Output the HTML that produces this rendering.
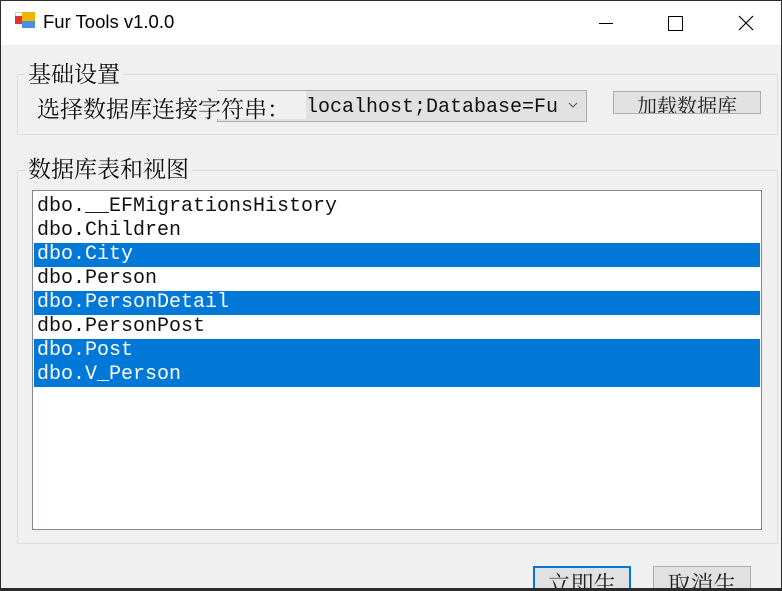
<!DOCTYPE html>
<html><head><meta charset="utf-8"><style>
*{margin:0;padding:0;box-sizing:border-box}
body{width:782px;height:591px;overflow:hidden;background:#2b2b2b;position:relative;font-family:"Liberation Sans","Noto Sans CJK SC",sans-serif}
.win{position:absolute;left:1px;top:1px;width:780px;height:587px;background:#f0f0f0;overflow:hidden}
.title{position:absolute;left:0;top:0;width:780px;height:44px;background:#fff}
.abs{position:absolute}
.cjk{font-family:"Noto Serif CJK SC","Noto Sans CJK SC",serif;font-size:23px;color:#111;line-height:1;white-space:nowrap}
.grp{position:absolute;border:1px solid #dcdcdc}
.legend{position:absolute;background:#f0f0f0;padding:0 3px}
.list{position:absolute;left:31px;top:189px;width:730px;height:340px;background:#fff;border:1px solid #828790}
.row{height:24px;line-height:24px;padding-left:3px;font-family:"Liberation Mono","Noto Serif CJK SC",monospace;font-size:20px;color:#111;margin:0 1px}
.sel{background:#0078d7;color:#fff}
.btn{position:absolute;background:#e1e1e1;border:1px solid #adadad;text-align:center}
</style></head><body>
<div class="win">
<div class="title">
 <div class="abs" style="left:14px;top:11px;width:8px;height:8px;background:#fff;border:1px solid #ccc"></div>
 <div class="abs" style="left:14px;top:15px;width:8px;height:8px;background:#d33;"></div>
 <div class="abs" style="left:21px;top:11px;width:13px;height:9px;background:#f0b400"></div>
 <div class="abs" style="left:21px;top:20px;width:13px;height:7px;background:#4a8fe0"></div>
 <div class="abs" style="left:42px;top:10px;font-size:18.5px;color:#000">Fur Tools v1.0.0</div>
 <div class="abs" style="left:598px;top:22px;width:14px;height:1px;background:#000"></div>
 <div class="abs" style="left:667px;top:15px;width:15px;height:15px;border:1px solid #000"></div>
 <svg class="abs" style="left:737px;top:14px" width="16" height="16"><path d="M1 1L15 15M15 1L1 15" stroke="#000" stroke-width="1.2"/></svg>
</div>
<div class="grp" style="left:16px;top:73px;width:761px;height:61px"></div>
<div class="legend cjk" style="left:24px;top:60px">基础设置</div>
<div class="abs" style="left:216px;top:89px;width:370px;height:32px;background:#e1e1e1;border:1px solid #adadad"></div>
<div class="abs" style="left:216px;top:90px;width:89px;height:28px;background:#f0f0f0"></div>
<div class="abs cjk" style="left:36px;top:95px">选择数据库连接字符串：</div>
<div class="abs" style="left:305px;top:95px;font-family:'Liberation Mono',monospace;font-size:20px;color:#111">localhost;Database=Fu</div>
<svg class="abs" style="left:567px;top:101px" width="10" height="6"><path d="M1 1L5 5L9 1" stroke="#555" fill="none"/></svg>
<div class="btn cjk" style="left:612px;top:90px;width:148px;height:23px;font-size:20px;padding-top:3px;overflow:hidden;color:#222">加载数据库</div>
<div class="grp" style="left:16px;top:169px;width:761px;height:374px"></div>
<div class="legend cjk" style="left:24px;top:155px">数据库表和视图</div>
<div class="list"><div style="height:4px"></div>
<div class="row">dbo.__EFMigrationsHistory</div>
<div class="row">dbo.Children</div>
<div class="row sel">dbo.City</div>
<div class="row">dbo.Person</div>
<div class="row sel">dbo.PersonDetail</div>
<div class="row">dbo.PersonPost</div>
<div class="row sel">dbo.Post</div>
<div class="row sel">dbo.V_Person</div>
</div>
<div class="btn cjk" style="left:532px;top:565px;width:98px;height:30px;border:2px solid #0078d7;padding-top:3px;color:#222">立即生</div>
<div class="btn cjk" style="left:652px;top:565px;width:98px;height:30px;padding-top:4px;color:#222">取消生</div>
</div>
</body></html>
